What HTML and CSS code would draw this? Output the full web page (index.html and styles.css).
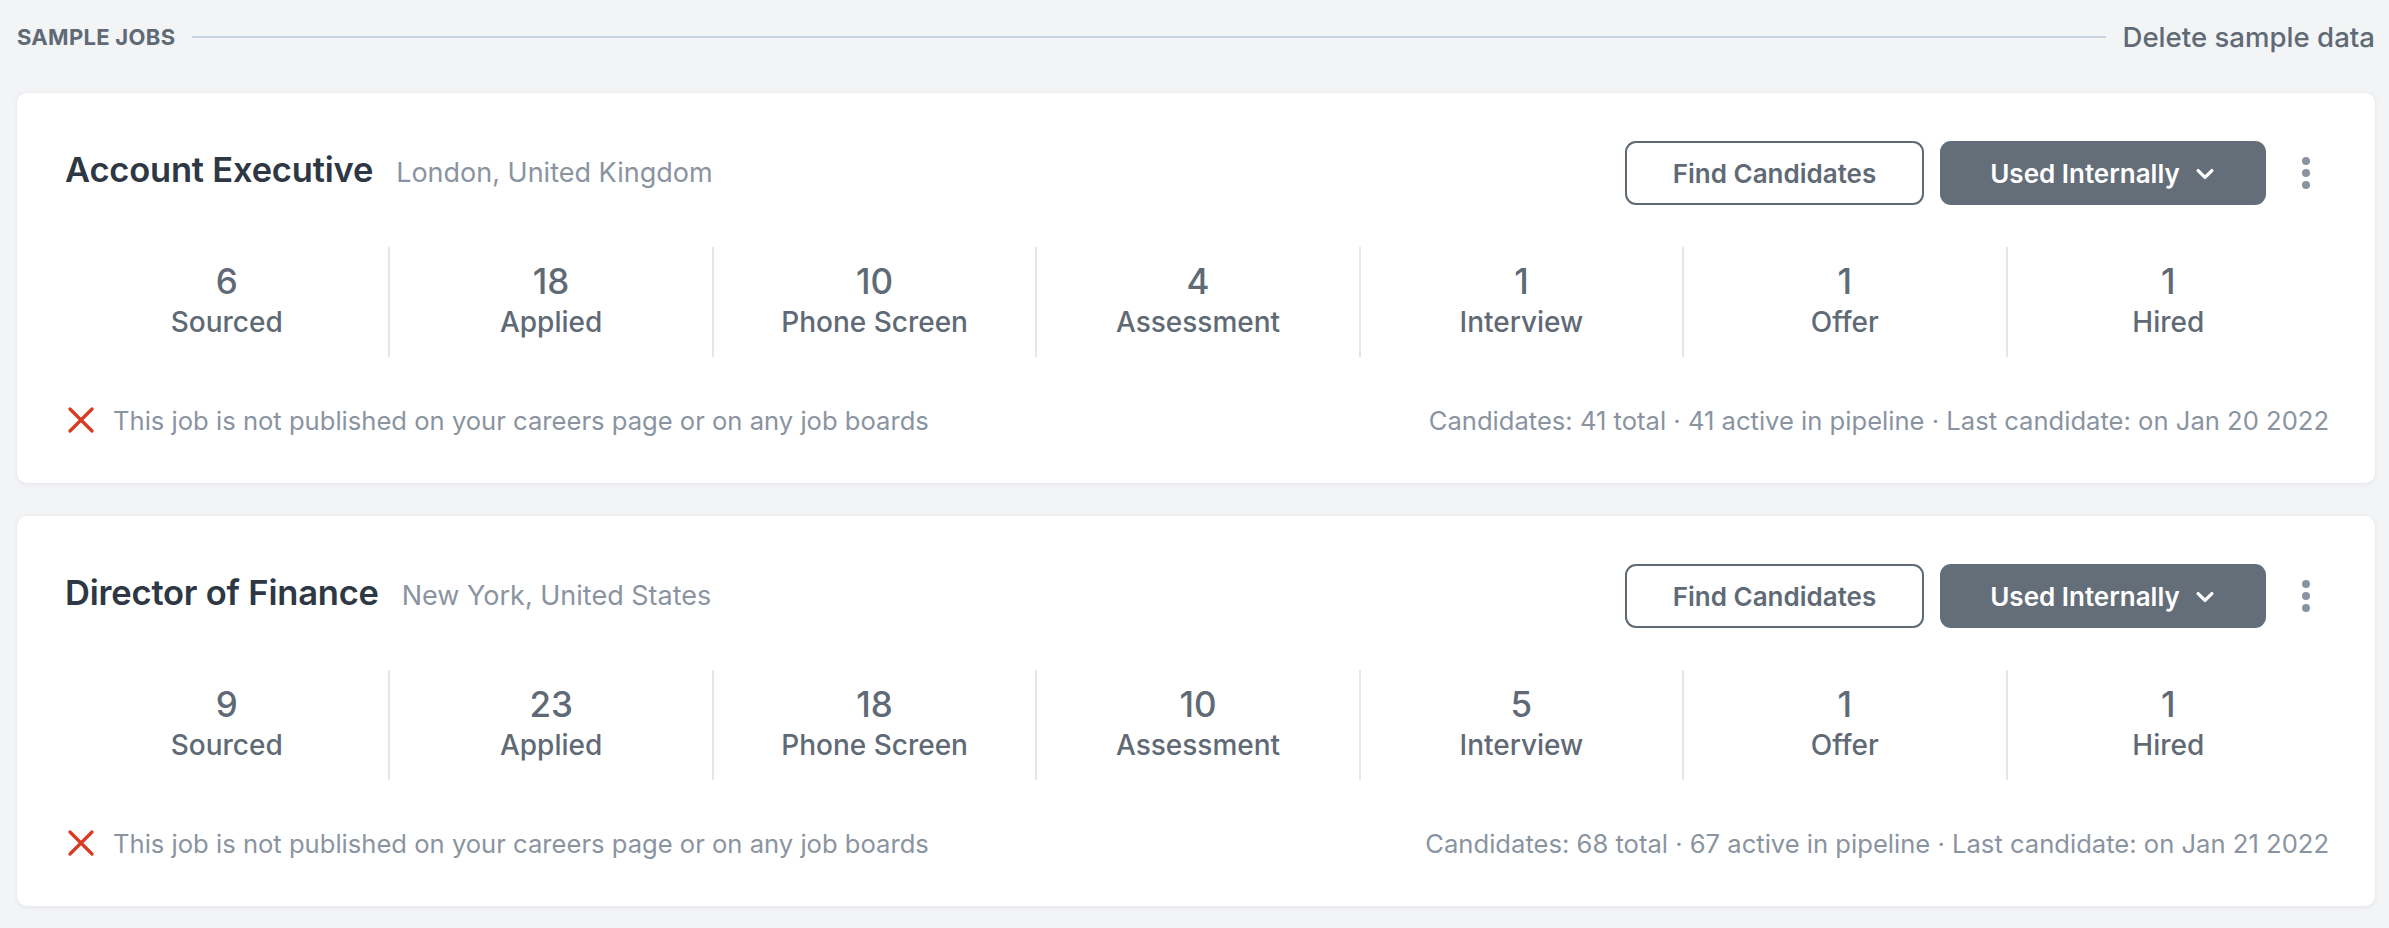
FILE: index.html
```html
<!DOCTYPE html>
<html lang="en">
<head>
<meta charset="utf-8">
<title>Sample Jobs</title>
<link rel="stylesheet" href="styles.css">
</head>
<body>
<div class="page">
  <div class="section-head">
    <span class="section-title">SAMPLE JOBS</span>
    <span class="rule"></span>
    <a class="delete-link">Delete sample data</a>
  </div>

  <div class="job-card">
    <div class="job-head">
      <div class="job-name">
        <span class="job-title">Account Executive</span>
        <span class="job-location">London, United Kingdom</span>
      </div>
      <div class="job-actions">
        <button class="btn btn-outline">Find Candidates</button>
        <button class="btn btn-solid">Used Internally
          <svg class="chevron" viewBox="0 0 16 16" width="16" height="16"><path d="M3 5.5l5 5 5-5" fill="none" stroke="#fff" stroke-width="2.4" stroke-linecap="round" stroke-linejoin="round"/></svg>
        </button>
        <span class="kebab"><i></i><i></i><i></i></span>
      </div>
    </div>
    <div class="stages">
      <div class="stage"><span class="count">6</span><span class="label">Sourced</span></div>
      <div class="stage"><span class="count">18</span><span class="label">Applied</span></div>
      <div class="stage"><span class="count">10</span><span class="label">Phone Screen</span></div>
      <div class="stage"><span class="count">4</span><span class="label">Assessment</span></div>
      <div class="stage"><span class="count">1</span><span class="label">Interview</span></div>
      <div class="stage"><span class="count">1</span><span class="label">Offer</span></div>
      <div class="stage"><span class="count">1</span><span class="label">Hired</span></div>
    </div>
    <div class="job-foot">
      <div class="status">
        <svg class="x-icon" viewBox="0 0 26 26" width="26" height="26"><path d="M2 2l22 22M24 2L2 24" stroke="#d93a22" stroke-width="3.2" stroke-linecap="round"/></svg>
        <span>This job is not published on your careers page or on any job boards</span>
      </div>
      <div class="summary">Candidates: 41 total · 41 active in pipeline · Last candidate: on Jan 20 2022</div>
    </div>
  </div>

  <div class="job-card">
    <div class="job-head">
      <div class="job-name">
        <span class="job-title">Director of Finance</span>
        <span class="job-location">New York, United States</span>
      </div>
      <div class="job-actions">
        <button class="btn btn-outline">Find Candidates</button>
        <button class="btn btn-solid">Used Internally
          <svg class="chevron" viewBox="0 0 16 16" width="16" height="16"><path d="M3 5.5l5 5 5-5" fill="none" stroke="#fff" stroke-width="2.4" stroke-linecap="round" stroke-linejoin="round"/></svg>
        </button>
        <span class="kebab"><i></i><i></i><i></i></span>
      </div>
    </div>
    <div class="stages">
      <div class="stage"><span class="count">9</span><span class="label">Sourced</span></div>
      <div class="stage"><span class="count">23</span><span class="label">Applied</span></div>
      <div class="stage"><span class="count">18</span><span class="label">Phone Screen</span></div>
      <div class="stage"><span class="count">10</span><span class="label">Assessment</span></div>
      <div class="stage"><span class="count">5</span><span class="label">Interview</span></div>
      <div class="stage"><span class="count">1</span><span class="label">Offer</span></div>
      <div class="stage"><span class="count">1</span><span class="label">Hired</span></div>
    </div>
    <div class="job-foot">
      <div class="status">
        <svg class="x-icon" viewBox="0 0 26 26" width="26" height="26"><path d="M2 2l22 22M24 2L2 24" stroke="#d93a22" stroke-width="3.2" stroke-linecap="round"/></svg>
        <span>This job is not published on your careers page or on any job boards</span>
      </div>
      <div class="summary">Candidates: 68 total · 67 active in pipeline · Last candidate: on Jan 21 2022</div>
    </div>
  </div>
</div>
</body>
</html>
```
FILE: styles.css
```css
* { box-sizing: border-box; }

html, body {
  margin: 0;
  background: #f3f4f6;
  font-family: Inter, "Noto Sans", "Liberation Sans", sans-serif;
  color: #5f6a76;
}

.page {
  padding: 17px 14px 20px 17px;
}

/* Section header with rule */
.section-head {
  display: flex;
  align-items: center;
  height: 40px;
  margin-bottom: 36px;
}

.section-title {
  font-size: 22px;
  font-weight: 700;
  color: #5f6a76;
  letter-spacing: 0.3px;
}

.rule {
  flex: 1;
  height: 2px;
  background: #c8d4e1;
  margin: 0 16px 0 17px;
}

.delete-link {
  font-size: 27.6px;
  font-weight: 500;
  color: #5f6a76;
  cursor: pointer;
}

/* Job card */
.job-card {
  background: #fff;
  border-radius: 10px;
  box-shadow: 0 1px 5px rgba(30, 40, 60, 0.08);
  padding: 48px 46px 48px 48px;
  margin-bottom: 33px;
}

.job-head {
  display: flex;
  align-items: center;
  justify-content: space-between;
  height: 64px;
}

.job-name {
  display: flex;
  align-items: baseline;
  margin-top: -8px;
}

.job-title {
  font-size: 34.5px;
  font-weight: 600;
  color: #2e3844;
  letter-spacing: -0.2px;
}

.job-location {
  font-size: 27px;
  color: #8a94a1;
  margin-left: 23px;
}

.job-actions {
  display: flex;
  align-items: center;
}

.btn {
  height: 64px;
  border-radius: 11px;
  font-family: inherit;
  font-size: 26px;
  font-weight: 600;
  display: inline-flex;
  align-items: center;
  justify-content: center;
  cursor: pointer;
}

.btn-outline {
  width: 299px;
  background: #fff;
  border: 2px solid #5f6a76;
  color: #5f6a76;
}

.btn-solid {
  width: 326px;
  margin-left: 16px;
  background: #646e79;
  border: none;
  color: #fff;
  gap: 14px;
}

.chevron {
  width: 22px;
  height: 22px;
  margin-top: 2px;
}

.kebab {
  display: flex;
  flex-direction: column;
  align-items: center;
  gap: 4px;
  width: 24px;
  margin: 0 11px 0 28px;
}

.kebab i {
  width: 8px;
  height: 8px;
  border-radius: 50%;
  background: #8a94a1;
}

/* Pipeline stages */
.stages {
  display: grid;
  grid-template-columns: repeat(7, 1fr);
  margin-top: 42px;
}

.stage {
  display: flex;
  flex-direction: column;
  align-items: center;
  height: 110px;
  padding-top: 14px;
}

.stage + .stage {
  border-left: 2px solid #e3e7ec;
}

.count {
  font-size: 35px;
  font-weight: 500;
  line-height: 40px;
  color: #5f6a76;
}

.label {
  font-size: 28px;
  font-weight: 500;
  line-height: 36px;
  margin-top: 3px;
  color: #5f6a76;
}

/* Footer line */
.job-foot {
  display: flex;
  align-items: center;
  justify-content: space-between;
  height: 30px;
  margin-top: 48px;
  font-size: 25.6px;
  color: #8a94a1;
}

.status {
  display: flex;
  align-items: center;
}

.x-icon {
  margin: 0 19px 0 3px;
  flex: none;
}

.summary {
  white-space: nowrap;
}
```
